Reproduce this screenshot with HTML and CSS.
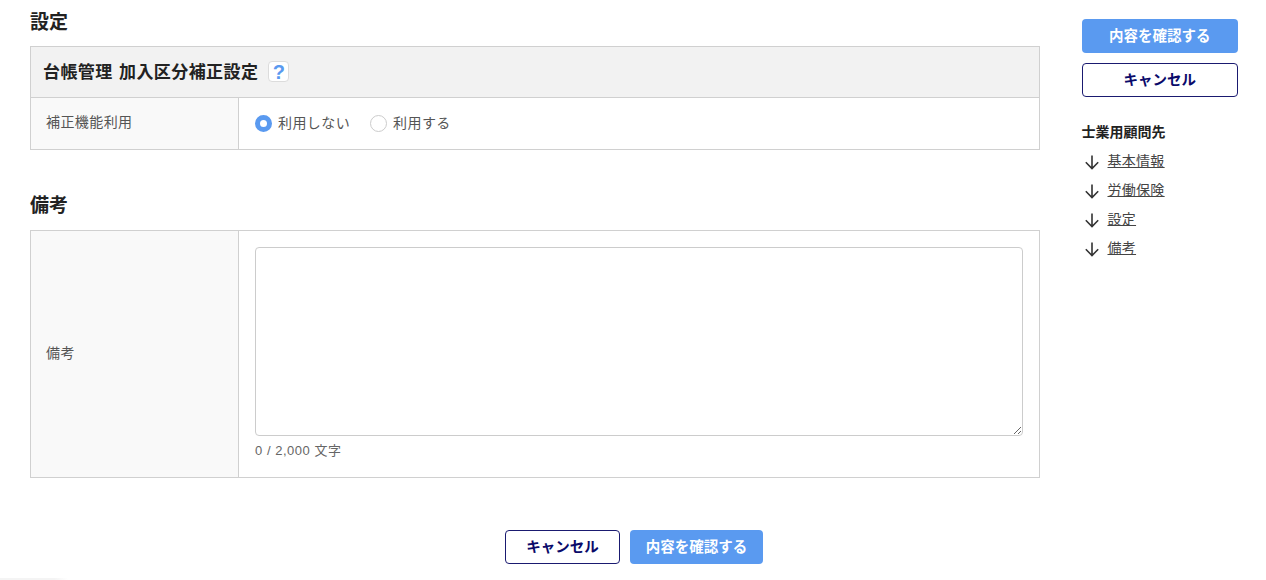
FILE: index.html
```html
<!DOCTYPE html>
<html lang="ja">
<head>
<meta charset="utf-8">
<title>設定</title>
<link rel="stylesheet" href="styles.css">
</head>
<body>
<div class="page">
  <main class="main">
    <h2 class="section-title first">設定</h2>
    <div class="panel">
      <div class="panel-head">
        <span class="panel-title">台帳管理 加入区分補正設定</span>
        <span class="help">?</span>
      </div>
      <div class="row row-radio">
        <div class="label">補正機能利用</div>
        <div class="value radios">
          <label class="radio"><span class="dot on"></span>利用しない</label>
          <label class="radio"><span class="dot"></span>利用する</label>
        </div>
      </div>
    </div>
    <h2 class="section-title second">備考</h2>
    <div class="panel">
      <div class="row row-note">
        <div class="label">備考</div>
        <div class="value note">
          <textarea class="textarea"></textarea>
          <div class="counter">0 / 2,000 文字</div>
        </div>
      </div>
    </div>
    <div class="actions">
      <button class="btn btn-outline btn-bottom-cancel">キャンセル</button>
      <button class="btn btn-primary btn-bottom-ok">内容を確認する</button>
    </div>
  </main>
  <aside class="side">
    <button class="btn btn-primary btn-side">内容を確認する</button>
    <button class="btn btn-outline btn-side">キャンセル</button>
    <div class="side-title">士業用顧問先</div>
    <ul class="side-nav">
      <li><svg class="arrow" viewBox="0 0 16 16"><path d="M8 1.5V14.5M1.8 8.3L8 14.5L14.2 8.3"/></svg><a href="#">基本情報</a></li>
      <li><svg class="arrow" viewBox="0 0 16 16"><path d="M8 1.5V14.5M1.8 8.3L8 14.5L14.2 8.3"/></svg><a href="#">労働保険</a></li>
      <li><svg class="arrow" viewBox="0 0 16 16"><path d="M8 1.5V14.5M1.8 8.3L8 14.5L14.2 8.3"/></svg><a href="#">設定</a></li>
      <li><svg class="arrow" viewBox="0 0 16 16"><path d="M8 1.5V14.5M1.8 8.3L8 14.5L14.2 8.3"/></svg><a href="#">備考</a></li>
    </ul>
  </aside>
</div>
<div class="edge-shadow"></div>
</body>
</html>
```
FILE: styles.css
```css
* { box-sizing: border-box; }
html, body { margin: 0; padding: 0; height: 580px; overflow: hidden; background: #fff; }
body { font-family: "Noto Sans CJK JP", "Noto Sans", sans-serif; color: #333; }
.page { display: flex; align-items: flex-start; padding-left: 30px; }
.main { width: 1010px; flex: none; }
.section-title { margin: 0; font-size: 19px; line-height: 26px; font-weight: 700; color: #222; }
.section-title.first { padding-top: 8px; height: 46px; }
.section-title.second { padding-top: 41px; height: 80px; }
.panel { border: 1px solid #d0d0d0; }
.panel-head { height: 51px; background: #f2f2f2; border-bottom: 1px solid #d0d0d0; display: flex; align-items: center; padding: 0 0 1px 12px; font-size: 17px; font-weight: 700; color: #222; letter-spacing: .025em; word-spacing: 2px; }
.panel-title { margin-bottom: 2px; }
.help { width: 21px; height: 21px; margin-left: 10px; border: 1px solid #dcdcdc; border-radius: 4px; background: #fff; color: #5a9af0; font-size: 20px; line-height: 21px; text-align: center; font-family: "Liberation Sans", sans-serif; letter-spacing: 0; }
.row { display: flex; }
.row-radio { height: 51px; }
.row-note { height: 246px; }
.label { width: 208px; flex: none; background: #f9f9f9; border-right: 1px solid #d0d0d0; display: flex; align-items: center; padding: 0 0 5px 15px; font-size: 14px; letter-spacing: .03em; color: #555; }
.value { flex: 1; }
.radios { display: flex; align-items: center; gap: 20px; padding: 0 0 3px 16px; font-size: 14px; letter-spacing: .03em; color: #555; }
.radio { display: flex; align-items: center; gap: 6px; line-height: 20px; }
.dot { width: 17px; height: 17px; border-radius: 50%; border: 1px solid #ccc; background: #fff; flex: none; margin-top: 3px; }
.dot.on { border: 5px solid #5a9af0; }
.note { padding: 16px 16px 0 16px; }
.textarea { display: block; width: 100%; height: 189px; border: 1px solid #ccc; border-radius: 4px; background: #fff; margin: 0; padding: 8px; resize: vertical; font-family: inherit; }
.counter { margin-top: 6px; font-size: 13px; line-height: 18px; letter-spacing: .04em; color: #666; font-family: "Liberation Sans", "Noto Sans CJK JP", sans-serif; }
.actions { display: flex; justify-content: center; gap: 10px; margin: 52px -198px 0 0; }
.btn { height: 34px; border-radius: 4px; font-family: inherit; font-size: 14.5px; font-weight: 700; padding: 0 0 3px; cursor: pointer; flex: none; }
.btn-primary { background: #5a9af0; border: 0; color: #fff; }
.btn-outline { background: #fff; border: 1px solid #1a1a70; color: #0a0a6a; }
.btn-bottom-cancel { width: 115px; }
.btn-bottom-ok { width: 133px; }
.side { width: 156.5px; margin-left: 41.5px; flex: none; padding-top: 19px; display: flex; flex-direction: column; }
.btn-side { width: 100%; height: 34px; margin-bottom: 10px; }
.side-title { margin-top: 14px; font-size: 14px; line-height: 20px; font-weight: 700; color: #222; }
.side-nav { list-style: none; margin: 5px 0 0; padding: 0; }
.side-nav li { display: flex; align-items: center; height: 29.2px; font-size: 14px; letter-spacing: .02em; color: #444; }
.side-nav a { color: #444; text-decoration: underline; margin-bottom: 2px; }
.arrow { width: 16px; height: 16px; margin: 2px 8px 0 2px; fill: none; stroke: #333; stroke-width: 1.6; flex: none; }
.edge-shadow { position: absolute; left: 0; top: 578px; width: 68px; height: 2px; background: linear-gradient(to right, #f4f4f4 80%, #fff); }
```
